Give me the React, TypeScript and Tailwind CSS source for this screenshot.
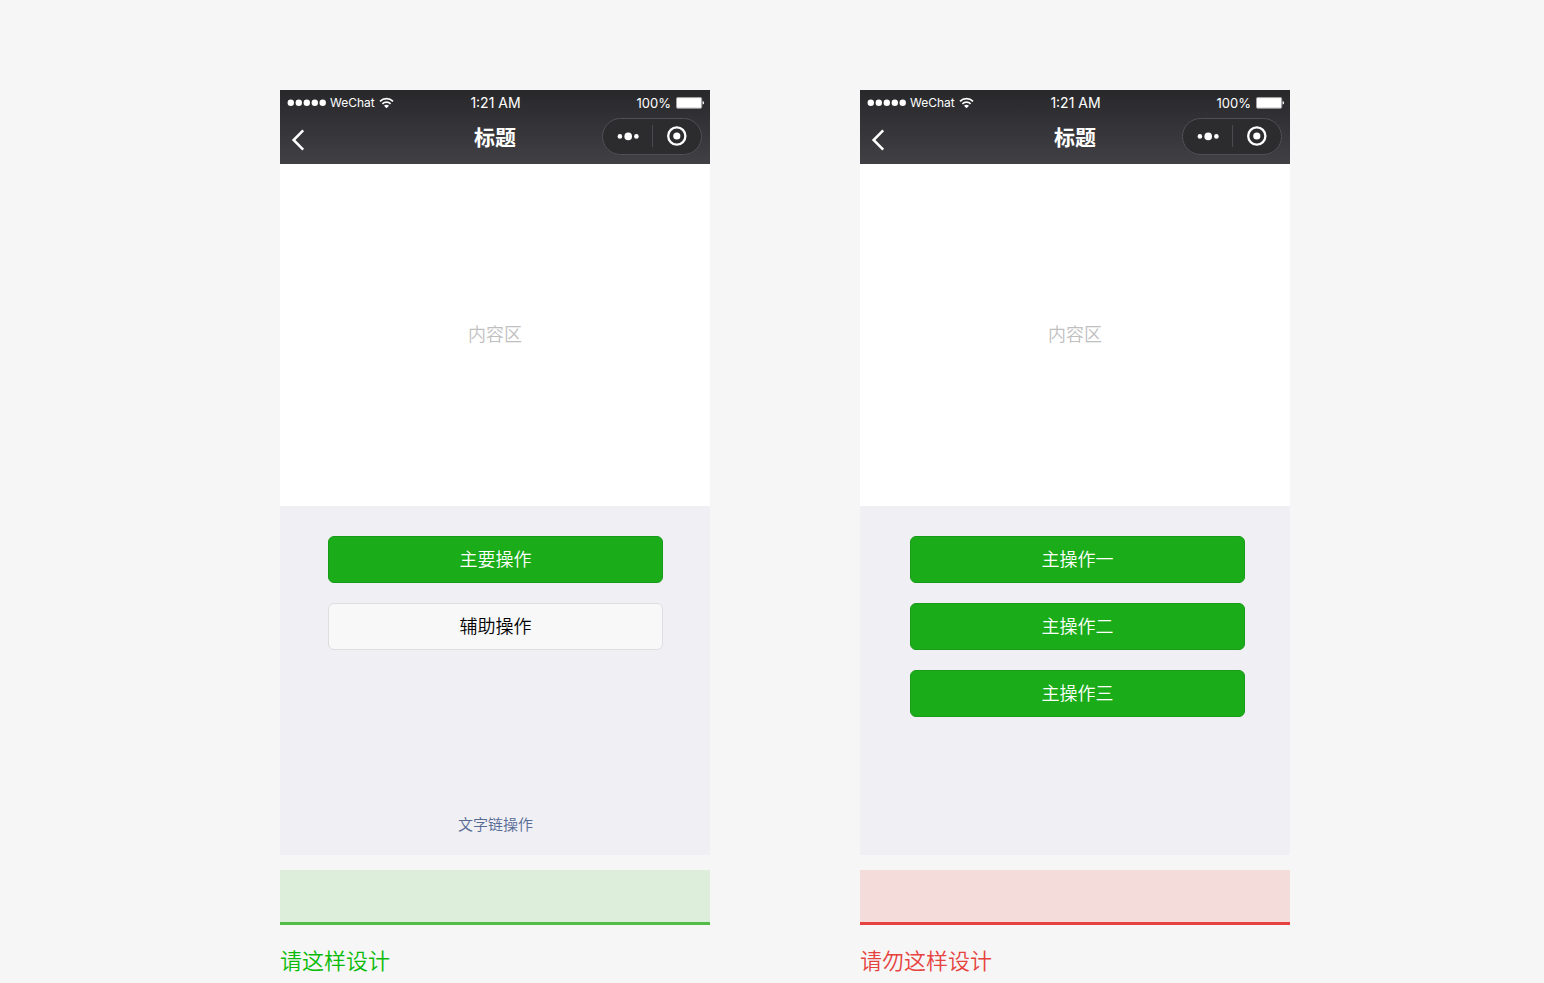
import type { ReactNode } from 'react';

function SignalDots() {
  return (
    <svg width="39" height="8" viewBox="0 0 39 8" fill="#fff" aria-hidden="true">
      <circle cx="3.8" cy="3.7" r="3.2" />
      <circle cx="11.8" cy="3.7" r="3.2" />
      <circle cx="19.8" cy="3.7" r="3.2" />
      <circle cx="27.8" cy="3.7" r="3.2" />
      <circle cx="35.7" cy="3.7" r="3.2" />
    </svg>
  );
}

function WifiIcon() {
  return (
    <svg width="15" height="12" viewBox="0 0 15 12" fill="none" stroke="#fff" strokeWidth="1.7" aria-hidden="true">
      <path d="M1 4.3C4.6 0.7 10.4 0.7 14 4.3" />
      <path d="M3.4 6.8C5.7 4.6 9.3 4.6 11.6 6.8" />
      <path d="M7.5 11.2L5 8.7C6.4 7.4 8.6 7.4 10 8.7Z" fill="#fff" stroke="none" />
    </svg>
  );
}

function BatteryIcon() {
  return (
    <svg width="28" height="12" viewBox="0 0 28 12" aria-hidden="true">
      <rect x="0.5" y="0.6" width="25.2" height="10.6" rx="1.2" fill="#fff" stroke="#a3a3a5" />
      <path d="M26.6 4C27.5 4.2 28 4.9 28 5.8C28 6.7 27.5 7.4 26.6 7.6Z" fill="#fff" />
    </svg>
  );
}

function PhoneHeader() {
  return (
    <header className="h-[74px] bg-linear-to-b from-[#28282b] to-[#414045] font-normal text-white">
      <div className="grid h-[26px] grid-cols-3 items-center pr-[6px] pl-[7px] text-[13px] leading-[26px]">
        <div className="flex items-center gap-1">
          <SignalDots />
          <span className="text-[12px]">WeChat</span>
          <WifiIcon />
        </div>
        <div className="text-center text-[14px]">1:21 AM</div>
        <div className="flex items-center justify-end gap-[5px]">
          <span>100%</span>
          <BatteryIcon />
        </div>
      </div>
      <div className="grid h-11 grid-cols-3 items-center px-2">
        <button type="button" aria-label="返回" className="flex h-9 w-6 items-center pt-1 pl-[3px]">
          <svg width="14" height="22" viewBox="0 0 14 22" fill="none" stroke="#fff" strokeWidth="2.5" aria-hidden="true">
            <path d="M12.2 1.4L2.6 11L12.2 20.6" />
          </svg>
        </button>
        <h2 className="text-center text-[21px] leading-[44px] font-bold">标题</h2>
        <div className="mb-1 flex h-[37px] w-[100px] items-center justify-self-end rounded-full border border-[#515155] bg-[#2c2c2f]">
          <button type="button" aria-label="更多" className="flex flex-1 justify-center">
            <svg width="24" height="20" viewBox="0 0 24 20" fill="#fff" aria-hidden="true">
              <circle cx="4.9" cy="10.4" r="2.3" />
              <circle cx="13.2" cy="10.4" r="3.8" />
              <circle cx="21.4" cy="10.4" r="2.3" />
            </svg>
          </button>
          <span className="h-[22px] w-px bg-[#4b4b4f]" />
          <button type="button" aria-label="关闭" className="flex flex-1 justify-center">
            <svg width="20" height="20" viewBox="0 0 20 20" fill="none" aria-hidden="true">
              <circle cx="9.8" cy="10" r="8.6" stroke="#fff" strokeWidth="2.3" />
              <circle cx="9.8" cy="10" r="3.6" fill="#fff" />
            </svg>
          </button>
        </div>
      </div>
    </header>
  );
}

function ActionButton({ primary = false, children }: { primary?: boolean; children: ReactNode }) {
  const tone = primary
    ? 'border-[#189b18] bg-[#1aad19] text-white'
    : 'border-[#dedee1] bg-[#f8f8f8] text-black';
  return (
    <button type="button" className={`h-[47px] w-full rounded-[6px] border text-[18px] leading-[45px] ${tone}`}>
      {children}
    </button>
  );
}

type ExampleProps = {
  caption: string;
  captionClass: string;
  barClass: string;
  actionsClass: string;
  children: ReactNode;
};

function Example({ caption, captionClass, barClass, actionsClass, children }: ExampleProps) {
  return (
    <figure className="w-full max-w-[430px]">
      <PhoneHeader />
      <div className="flex h-[342px] items-center justify-center bg-white pb-px text-[18px] text-[#bfbfbf]">内容区</div>
      <div className={`flex h-[349px] flex-col gap-5 bg-[#efeff4] pt-[30px] pb-[18px] ${actionsClass}`}>
        {children}
      </div>
      <div className={`mt-[15px] h-[55px] border-b-3 ${barClass}`} />
      <figcaption className={`mt-5 text-[22px] leading-8 ${captionClass}`}>{caption}</figcaption>
    </figure>
  );
}

export default function App() {
  return (
    <main className="flex min-h-screen justify-center gap-[150px] bg-[#f6f6f6] pt-[90px] pl-[26px] font-['Inter','Noto_Sans_CJK_SC',sans-serif] font-[350]">
      <Example
        caption="请这样设计"
        captionClass="text-[#09bb07]"
        barClass="border-[#51bd46] bg-[#ddeeda]"
        actionsClass="pr-[47px] pl-12"
      >
        <ActionButton primary>主要操作</ActionButton>
        <ActionButton>辅助操作</ActionButton>
        <a href="#" className="mt-auto self-center text-[15px] leading-6 text-[#576b95]">文字链操作</a>
      </Example>
      <Example
        caption="请勿这样设计"
        captionClass="text-[#e64340]"
        barClass="border-[#e64340] bg-[#f4dcda]"
        actionsClass="pr-[45px] pl-[50px]"
      >
        <ActionButton primary>主操作一</ActionButton>
        <ActionButton primary>主操作二</ActionButton>
        <ActionButton primary>主操作三</ActionButton>
      </Example>
    </main>
  );
}
